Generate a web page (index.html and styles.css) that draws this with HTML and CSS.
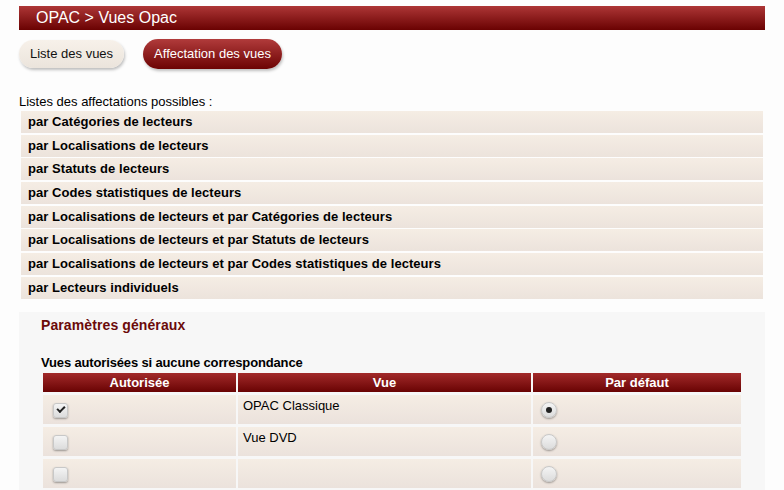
FILE: index.html
```html
<!DOCTYPE html>
<html lang="fr">
<head>
<meta charset="utf-8">
<title>OPAC > Vues Opac</title>
<link rel="stylesheet" href="styles.css">
</head>
<body>
<div class="page">
  <h1 class="titlebar">OPAC &gt; Vues Opac</h1>
  <div class="tabs">
    <span class="btn btn-light">Liste des vues</span>
    <span class="btn btn-dark">Affectation des vues</span>
  </div>
  <p class="intro">Listes des affectations possibles :</p>
  <ul class="list">
    <li>par Catégories de lecteurs</li>
    <li>par Localisations de lecteurs</li>
    <li>par Statuts de lecteurs</li>
    <li>par Codes statistiques de lecteurs</li>
    <li>par Localisations de lecteurs et par Catégories de lecteurs</li>
    <li>par Localisations de lecteurs et par Statuts de lecteurs</li>
    <li>par Localisations de lecteurs et par Codes statistiques de lecteurs</li>
    <li>par Lecteurs individuels</li>
  </ul>
  <div class="panel">
    <h2 class="panel-title">Paramètres généraux</h2>
    <h3 class="subtitle">Vues autorisées si aucune correspondance</h3>
    <table class="grid">
      <thead>
        <tr><th class="c1">Autorisée</th><th class="c2">Vue</th><th class="c3">Par défaut</th></tr>
      </thead>
      <tbody>
        <tr>
          <td><span class="check checked"></span></td>
          <td>OPAC Classique</td>
          <td><span class="radio selected"></span></td>
        </tr>
        <tr>
          <td><span class="check"></span></td>
          <td>Vue DVD</td>
          <td><span class="radio"></span></td>
        </tr>
        <tr>
          <td><span class="check"></span></td>
          <td></td>
          <td><span class="radio"></span></td>
        </tr>
      </tbody>
    </table>
  </div>
</div>
</body>
</html>
```
FILE: styles.css
```css
html, body {
  margin: 0;
  padding: 0;
  background: #fdfdfd;
}
body {
  font-family: "Liberation Sans", Arial, sans-serif;
  font-size: 13px;
  color: #000;
}
.page {
  padding: 6px 19px 0 19px;
}
.titlebar {
  margin: 0;
  height: 24px;
  line-height: 24px;
  padding-left: 17px;
  font-size: 16px;
  font-weight: normal;
  color: #fff;
  background: linear-gradient(#ad3636, #6a0202);
}
.tabs {
  display: flex;
  gap: 19px;
  margin-top: 9px;
  align-items: center;
}
.btn {
  display: inline-block;
  height: 28px;
  line-height: 28px;
  padding: 0 11px;
  border-radius: 14px;
  font-size: 13px;
  box-shadow: 1px 2px 3px rgba(0,0,0,0.25);
}
.btn-light {
  background: linear-gradient(#f7f1ea, #ebe4dc);
  color: #111;
}
.btn-dark {
  height: 30px;
  line-height: 30px;
  border-radius: 15px;
  background: linear-gradient(#b13b3b, #6c0303);
  color: #fff;
}
.intro {
  margin: 26px 0 0 0;
  line-height: 14px;
}
.list {
  list-style: none;
  margin: 2px 2px 0 2px;
  padding: 0;
}
.list li {
  height: 22px;
  line-height: 22px;
  margin-bottom: 1.7px;
  padding-left: 7px;
  font-weight: bold;
  letter-spacing: 0.05px;
  background: linear-gradient(#f5ede4, #ece3dc);
}
.panel {
  margin-top: 13px;
  background: #f7f7f7;
  padding: 4px 22px 4px 22px;
}
.panel-title {
  margin: 0;
  font-size: 14px;
  line-height: 18px;
  color: #6b0a0a;
  letter-spacing: 0.1px;
}
.subtitle {
  margin: 22px 0 0 0;
  font-size: 13px;
  line-height: 14px;
  letter-spacing: -0.15px;
}
.grid {
  width: 702px;
  border-spacing: 2px 3px;
  margin: 0;
  font-size: 13px;
}
.grid th {
  height: 19px;
  padding: 0;
  color: #fff;
  font-weight: bold;
  text-align: center;
  background: linear-gradient(#a22a2a, #690303);
}
.grid .c1 { width: 193px; }
.grid .c2 { width: 293px; }
.grid td {
  height: 29px;
  padding: 3px 5px 0 5px;
  vertical-align: top;
  background: linear-gradient(#f5ede4, #ebe2dc);
  box-sizing: border-box;
}
.check, .radio {
  display: block;
  width: 15px;
  height: 15px;
  box-sizing: border-box;
  margin: 5px 0 0 5px;
  background: linear-gradient(#f4f4f4, #dcdcdc);
  border: 1px solid #c8c8c8;
  box-shadow: 0 1px 2px rgba(0,0,0,0.35);
  position: relative;
}
.check {
  border-radius: 3px;
}
.radio {
  width: 16px;
  height: 16px;
  border-radius: 50%;
  margin: 4px 0 0 3px;
}
.check.checked::after {
  content: "";
  position: absolute;
  left: 3px;
  top: 2px;
  width: 6px;
  height: 3px;
  border-left: 2px solid #222;
  border-bottom: 2px solid #222;
  transform: rotate(-45deg);
}
.radio.selected::after {
  content: "";
  position: absolute;
  left: 4px;
  top: 4px;
  width: 6px;
  height: 6px;
  border-radius: 50%;
  background: #222;
}
```
